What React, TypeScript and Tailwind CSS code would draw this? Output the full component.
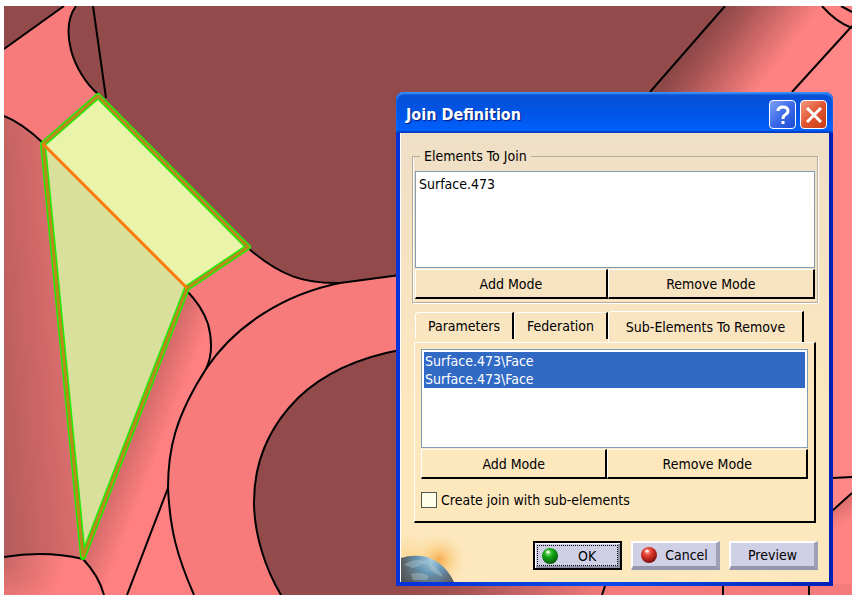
import { useState } from "react"
import type { ReactNode } from "react"

interface ModeButtonsProps {
  target: string
}

const tabs = ["Parameters", "Federation", "Sub-Elements To Remove"]

function ModelView() {
  return (
    <svg
      className="absolute inset-0 h-full w-full"
      viewBox="4 6 848 589"
      preserveAspectRatio="xMidYMid slice"
      aria-hidden="true"
    >
      <defs>
        <linearGradient id="left-wall" gradientUnits="userSpaceOnUse" x1="0" y1="400" x2="76" y2="394">
          <stop offset="0" stopColor="#b85d5d" />
          <stop offset="1" stopColor="#df6f6f" />
        </linearGradient>
        <linearGradient id="inner-wall" gradientUnits="userSpaceOnUse" x1="130" y1="430" x2="163" y2="443">
          <stop offset="0" stopColor="#d06767" />
          <stop offset="1" stopColor="#ff8080" />
        </linearGradient>
        <linearGradient id="upper-fillet" gradientUnits="userSpaceOnUse" x1="690" y1="50" x2="752" y2="98">
          <stop offset="0" stopColor="#8e4848" />
          <stop offset="0.25" stopColor="#a65353" />
          <stop offset="1" stopColor="#ff8282" />
        </linearGradient>
        <linearGradient id="floor" gradientUnits="userSpaceOnUse" x1="390" y1="0" x2="610" y2="0">
          <stop offset="0" stopColor="#934a4a" />
          <stop offset="0.3" stopColor="#a35252" />
          <stop offset="1" stopColor="#f47b7b" />
        </linearGradient>
        <linearGradient id="right-corner" gradientUnits="userSpaceOnUse" x1="842" y1="501" x2="852" y2="520">
          <stop offset="0" stopColor="#d96e6e" />
          <stop offset="1" stopColor="#ff8383" />
        </linearGradient>
        <radialGradient id="pocket" gradientUnits="userSpaceOnUse" cx="4" cy="560" r="60">
          <stop offset="0" stopColor="#c96666" />
          <stop offset="1" stopColor="#ff8080" />
        </radialGradient>
      </defs>

      <rect x="4" y="6" width="848" height="589" fill="#f87b7b" />
      <path d="M4 6H64L4 49Z" fill="#934a4a" />
      <path d="M4 116Q22 123 43 143L83 559Q45 550 4 557Z" fill="url(#left-wall)" />
      <path d="M186 290Q202 306 208 324Q215 350 206 369Q168 425 168 488Q172 545 194 595H4V557Q45 550 83 559Z" fill="url(#inner-wall)" />
      <path d="M4 557Q45 550 83 559Q100 577 104 595H4Z" fill="url(#pocket)" />
      <path d="M76 6C66 20 68 38 71 50C75 66 86 84 98 94L248 248C280 276 305 284 340 283L400 275V92H650L725 6Z" fill="#934a4a" />
      <path d="M725 6H852V92H650Z" fill="url(#upper-fillet)" />
      <path d="M852 26V595H792V92Z" fill="#ff8787" />
      <path d="M400 350C362 357 325 372 298 398C268 428 254 464 254 502C254 535 266 570 281 595H420V350Z" fill="#934a4a" />
      <path d="M820 522L852 493V595H820Z" fill="url(#right-corner)" />
      <rect x="400" y="584" width="452" height="11" fill="url(#floor)" />

      <g fill="none" stroke="#000000" strokeWidth="2">
        <path d="M64 6L4 49M93 6L106 98M4 116Q22 123 43 143" />
        <path d="M76 6C66 20 68 38 71 50C75 66 86 84 98 94" />
        <path d="M248 248C280 276 305 284 340 283L400 275" />
        <path d="M340 283C285 294 235 325 206 369C175 417 168 450 168 488C170 530 177 556 194 595" />
        <path d="M186 290Q202 306 208 324Q215 350 206 369M168 488L127 595" />
        <path d="M4 557Q45 550 83 559Q99 576 104 595" />
        <path d="M400 350C362 357 325 372 298 398C268 428 254 464 254 502C254 535 266 570 281 595" />
        <path d="M725 6L650 92M852 26L792 92M822 6Q836 22 852 28M841 6L852 12" />
        <path d="M832 478L852 477M832 511L852 493M607 580L602 595M723 580V595M809 580V595" />
      </g>

      <path d="M43 144L98 96L248 246L187 288Z" fill="#e9f4aa" />
      <path d="M43 144L187 288L83 557Z" fill="#d8e09b" />
      <path d="M43 144L98 96L248 247L187 288L83 557Z" fill="none" stroke="#22ee08" strokeWidth="6" strokeLinejoin="round" />
      <path d="M43 144L98 96L248 247L187 288L83 557Z" fill="none" stroke="#b8891c" strokeWidth="3" />
      <path d="M43 144L187 288" stroke="#ff7b0c" strokeWidth="3" />
    </svg>
  )
}

function ModeButtons({ target }: ModeButtonsProps) {
  const style = "h-[30px] border-t border-r-2 border-b-2 border-l border-t-white border-r-black border-b-black border-l-white"

  return (
    <div className="mt-px grid grid-cols-[93fr_100fr]">
      <button type="button" aria-label={`Add Mode, ${target}`} className={style}>
        Add Mode
      </button>
      <button type="button" aria-label={`Remove Mode, ${target}`} className={style}>
        Remove Mode
      </button>
    </div>
  )
}

function ActionButton({ children }: { children: ReactNode }) {
  return (
    <button
      type="button"
      className="flex h-[29px] w-[89px] items-center justify-center gap-2 border-t-2 border-r-4 border-b-4 border-l-2 border-t-white border-r-[#9f9fb8] border-b-[#9595ae] border-l-white bg-[#cfcfe6]"
    >
      {children}
    </button>
  )
}

function Ball({ color }: { color: "green" | "red" }) {
  return (
    <svg className="h-4 w-4" viewBox="0 0 16 16" aria-hidden="true">
      <defs>
        <radialGradient id={`ball-${color}`} cx="0.4" cy="0.3" r="0.7">
          <stop offset="0" stopColor={color === "green" ? "#8cf07c" : "#ff9d8c"} />
          <stop offset="0.4" stopColor={color === "green" ? "#17a817" : "#e03a2e"} />
          <stop offset="1" stopColor={color === "green" ? "#045a04" : "#7c1010"} />
        </radialGradient>
      </defs>
      <circle cx="8" cy="8" r="8" fill={`url(#ball-${color})`} />
      <ellipse cx="6" cy="4" rx="2" ry="1.5" fill="#ffffff" opacity="0.8" />
    </svg>
  )
}

function Planet() {
  return (
    <svg className="absolute bottom-0 left-0 h-[50px] w-[70px]" viewBox="0 0 70 50" aria-hidden="true">
      <defs>
        <radialGradient id="glow" gradientUnits="userSpaceOnUse" cx="38" cy="28" r="27">
          <stop offset="0" stopColor="#f7ad52" />
          <stop offset="0.4" stopColor="#fbcb80" stopOpacity="0.8" />
          <stop offset="1" stopColor="#fbe0a8" stopOpacity="0" />
        </radialGradient>
        <radialGradient id="haze" gradientUnits="userSpaceOnUse" cx="10" cy="28" r="28">
          <stop offset="0" stopColor="#fbd48c" />
          <stop offset="1" stopColor="#fbe0a8" stopOpacity="0" />
        </radialGradient>
        <radialGradient id="globe" gradientUnits="userSpaceOnUse" cx="30" cy="28" r="38">
          <stop offset="0" stopColor="#a9cfe0" />
          <stop offset="0.35" stopColor="#6796b4" />
          <stop offset="0.7" stopColor="#5c666c" />
          <stop offset="1" stopColor="#4a4a48" />
        </radialGradient>
      </defs>
      <rect width="70" height="50" fill="url(#haze)" />
      <rect width="70" height="50" fill="url(#glow)" />
      <path d="M0 26Q12 22 26 25Q44 31 53 50H0Z" fill="url(#globe)" />
      <path d="M3 33Q14 25 26 30Q20 34 12 36ZM28 31Q38 36 42 45Q34 42 30 38ZM10 42Q20 39 28 44L26 48H12Z" fill="#c3d6da" opacity="0.35" />
    </svg>
  )
}

export default function App() {
  const [activeTab, setActiveTab] = useState(tabs[2])
  const [withSubElements, setWithSubElements] = useState(false)

  return (
    <main className="flex min-h-screen bg-white px-1 pt-[6px] pb-[5px] font-['DejaVu_Sans_Condensed','DejaVu_Sans',sans-serif] text-[14px] leading-[18px] text-black">
      <div className="relative flex flex-1 items-start justify-end overflow-hidden pt-[86px] pr-[19px] pb-2">
        <ModelView />

        <section
          role="dialog"
          aria-labelledby="dialog-title"
          className="relative w-[437px] rounded-t-lg bg-linear-to-r from-[#0831d9] via-[#0a4ae8] via-50% to-[#0020b8] px-1 pb-1"
        >
          <header className="-mx-1 flex h-[41px] items-center gap-1 rounded-t-lg bg-linear-to-b from-[#0a4fd0] via-[#0054e6] to-[#0062ff] pt-1 pr-[6px] pl-[10px] shadow-[inset_0_2px_2px_#3d95ff,inset_0_-2px_1px_#0040c8]">
            <h1 id="dialog-title" className="flex-1 text-[16px] font-bold text-white [text-shadow:1px_1px_1px_#0a1883]">
              Join Definition
            </h1>
            <button type="button" aria-label="Help" className="flex h-[29px] w-[27px] items-center justify-center rounded border border-white bg-linear-to-br from-[#7fa0f4] via-[#3d6be8] to-[#1c49d4]">
              <svg className="h-5 w-4" viewBox="0 0 16 20" fill="none" stroke="#ffffff" strokeWidth="3" aria-hidden="true">
                <path d="M3 6Q3 2 8 2T13 6Q13 8 10 10Q8 11 8 14M8 16V19" />
              </svg>
            </button>
            <button type="button" aria-label="Close" className="flex h-[29px] w-[27px] items-center justify-center rounded border border-white bg-linear-to-br from-[#f09a80] via-[#e05430] to-[#c83a12]">
              <svg className="h-4 w-4" viewBox="0 0 16 16" stroke="#ffffff" strokeWidth="3" aria-hidden="true">
                <path d="M1 1L15 15M15 1L1 15" />
              </svg>
            </button>
          </header>

          <div className="relative border-l border-white bg-linear-to-b from-[#efdfc6] to-[#fde7bd] to-60% px-[11px] pt-[14px] pb-3">
            <Planet />

            <fieldset className="border border-[#b5ad9c] px-[2px] pb-[3px] shadow-[1px_1px_0_#ffffff,inset_1px_0_0_#ffffff]">
              <legend className="ml-[5px] px-1">Elements To Join</legend>
              <ul className="mt-[6px] h-[97px] border border-[#7f9db9] bg-white px-[3px] pt-[3px]">
                <li>Surface.473</li>
              </ul>
              <ModeButtons target="elements" />
            </fieldset>

            <div role="tablist" className="mt-2 flex items-end px-[3px]">
              {tabs.map((tab) => (
                <button
                  key={tab}
                  type="button"
                  role="tab"
                  aria-selected={tab === activeTab}
                  onClick={() => setActiveTab(tab)}
                  className={
                    tab === activeTab
                      ? "h-[31px] flex-1 rounded-tl border-t border-r-2 border-l border-t-white border-r-black border-l-white"
                      : "mb-[3px] h-[27px] rounded-tl border-t border-r-2 border-l border-t-white border-r-black border-l-white px-3"
                  }
                >
                  {tab}
                </button>
              ))}
              <span className="w-[11px]" />
            </div>

            <div role="tabpanel" className="mx-[2px] border-t border-r-2 border-b-2 border-l border-t-white border-r-black border-b-black border-l-white px-[6px] pt-[6px] pb-3">
              <ul className="h-[99px] border border-[#7f9db9] bg-white p-[2px]">
                <li className="bg-[#316ac5] px-px text-white">Surface.473\Face</li>
                <li className="bg-[#316ac5] px-px text-white">Surface.473\Face</li>
              </ul>
              <ModeButtons target="sub-elements" />
              <label className="mt-3 flex items-center gap-1">
                <input
                  type="checkbox"
                  checked={withSubElements}
                  onChange={(e) => setWithSubElements(e.target.checked)}
                  className="h-4 w-4 appearance-none border border-[#4f5a50] bg-[#ffffe8] checked:bg-[#316ac5]"
                />
                Create join with sub-elements
              </label>
            </div>

            <div className="relative mt-[18px] flex justify-end gap-[9px]">
              <button type="button" className="h-[29px] w-[89px] border-2 border-black bg-[#cfcfe6] p-[2px] shadow-[inset_1px_1px_0_#ffffff,inset_-2px_-2px_0_#8f8fa5]">
                <span className="flex h-full items-center gap-5 border border-dotted border-black pl-1">
                  <Ball color="green" />
                  OK
                </span>
              </button>
              <ActionButton>
                <Ball color="red" />
                Cancel
              </ActionButton>
              <ActionButton>Preview</ActionButton>
            </div>
          </div>
        </section>
      </div>
    </main>
  )
}
